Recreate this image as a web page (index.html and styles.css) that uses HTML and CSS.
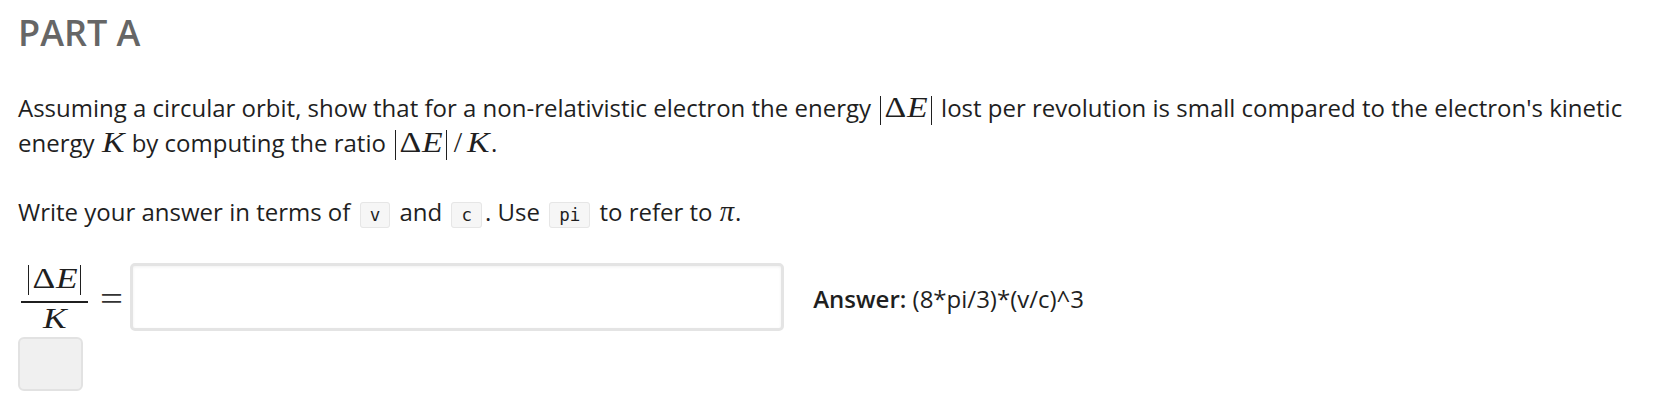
FILE: index.html
```html
<!DOCTYPE html>
<html lang="en">
<head>
<meta charset="utf-8">
<title>Part A</title>
<link rel="stylesheet" href="styles.css">
</head>
<body>
<div class="page">
  <h2 class="part-title">PART A</h2>
  <p class="prompt">Assuming a circular orbit, show that for a non-relativistic electron the energy <span class="math"><span class="bar"></span><span class="g delta">Δ</span><span class="g it e">E</span><span class="bar"></span></span> lost per revolution is small compared to the electron's kinetic energy <span class="math"><span class="g it k">K</span></span> by computing the ratio <span class="math"><span class="bar"></span><span class="g delta">Δ</span><span class="g it e">E</span><span class="bar"></span><span class="g slash">/</span><span class="g it k">K</span></span>.</p>
  <p class="prompt instructions">Write your answer in terms of <code class="code">v</code> and <code class="code">c</code>. Use <code class="code">pi</code> to refer to <span class="math"><span class="g it pi">π</span></span>.</p>
  <div class="answer-row">
    <div class="frac">
      <div class="num math"><span class="bar"></span><span class="g delta">Δ</span><span class="g it e">E</span><span class="bar"></span></div>
      <div class="frac-line"></div>
      <div class="den math"><span class="g it k">K</span></div>
    </div>
    <span class="eq">=</span>
    <div class="answer-input"></div>
    <div class="answer-text"><strong>Answer:</strong> (8*pi/3)*(v/c)^3</div>
  </div>
  <button class="submit-btn" type="button"></button>
</div>
</body>
</html>
```

FILE: styles.css
```css
html, body {
  margin: 0;
  padding: 0;
  background: #fff;
}

body {
  font-family: "Open Sans", "Liberation Sans", sans-serif;
  color: #1f1f1f;
}

.page {
  padding: 8px 18px 0 18px;
}

.part-title {
  margin: 0;
  font-size: 36px;
  font-weight: 600;
  line-height: 49px;
  color: #666;
}

.prompt {
  margin: 34px 0 0 0;
  font-size: 24px;
  line-height: 34.5px;
}

.instructions {
  margin-top: 35px;
}

/* math: KaTeX-like advance widths, Liberation Serif glyphs */
.math {
  font-family: "Liberation Serif", "Times New Roman", serif;
  font-size: 27px;
  line-height: 1;
  white-space: nowrap;
}

.g {
  display: inline-block;
  font-size: 1.06em;
  line-height: 1;
  text-align: center;
  transform: scaleX(1.18);
}

.it {
  font-style: italic;
}

.delta {
  width: 0.79em;
}

.e {
  width: 0.72em;
}

.k {
  width: 0.86em;
}

.slash {
  width: 0.55em;
  font-size: 1.12em;
  transform: none;
}

.pi {
  width: 0.57em;
  transform: none;
}

.bar {
  display: inline-block;
  width: 0;
  height: 1.08em;
  border-left: 1.4px solid #1f1f1f;
  vertical-align: -0.3em;
  margin: 0 0.115em;
}

.code {
  font-family: "DejaVu Sans Mono", "Liberation Mono", monospace;
  font-size: 17.5px;
  line-height: 1;
  padding: 2px 9px;
  margin: 0 3px;
  background: #f6f6f6;
  border: 1px solid #e6e6e6;
  border-radius: 3px;
  color: #1f1f1f;
}

.answer-row {
  display: flex;
  align-items: center;
  margin-top: 33px;
}

.frac {
  display: flex;
  flex-direction: column;
  align-items: center;
  margin-left: 3px;
  width: 67px;
}

.frac .math {
  font-size: 28.3px;
}

.num {
  line-height: 30px;
  height: 38px;
}

.num .bar {
  height: 30px;
  vertical-align: -7px;
}

.frac-line {
  width: 67px;
  height: 2px;
  flex: none;
  background: #1f1f1f;
}

.den {
  line-height: 32px;
  height: 28px;
}

.eq {
  font-family: "Liberation Serif", "Times New Roman", serif;
  font-size: 34px;
  line-height: 1;
  color: #333;
  margin: 4px 9px 0 14px;
  display: inline-block;
  transform: scaleX(1.2);
}

.answer-input {
  width: 648px;
  height: 62px;
  flex: none;
  border: 3px solid #e4e4e4;
  border-radius: 5px;
  box-shadow: inset 0 1px 3px rgba(0, 0, 0, 0.06);
  background: #fff;
}

.answer-text {
  margin-left: 29px;
  margin-top: 3px;
  font-size: 24px;
}

.answer-text strong {
  font-weight: 600;
}

.submit-btn {
  display: block;
  margin-top: 6px;
  width: 65px;
  height: 54px;
  background: #f0f0f0;
  border: 2px solid #e2e2e2;
  border-radius: 6px;
  padding: 0;
}
```
